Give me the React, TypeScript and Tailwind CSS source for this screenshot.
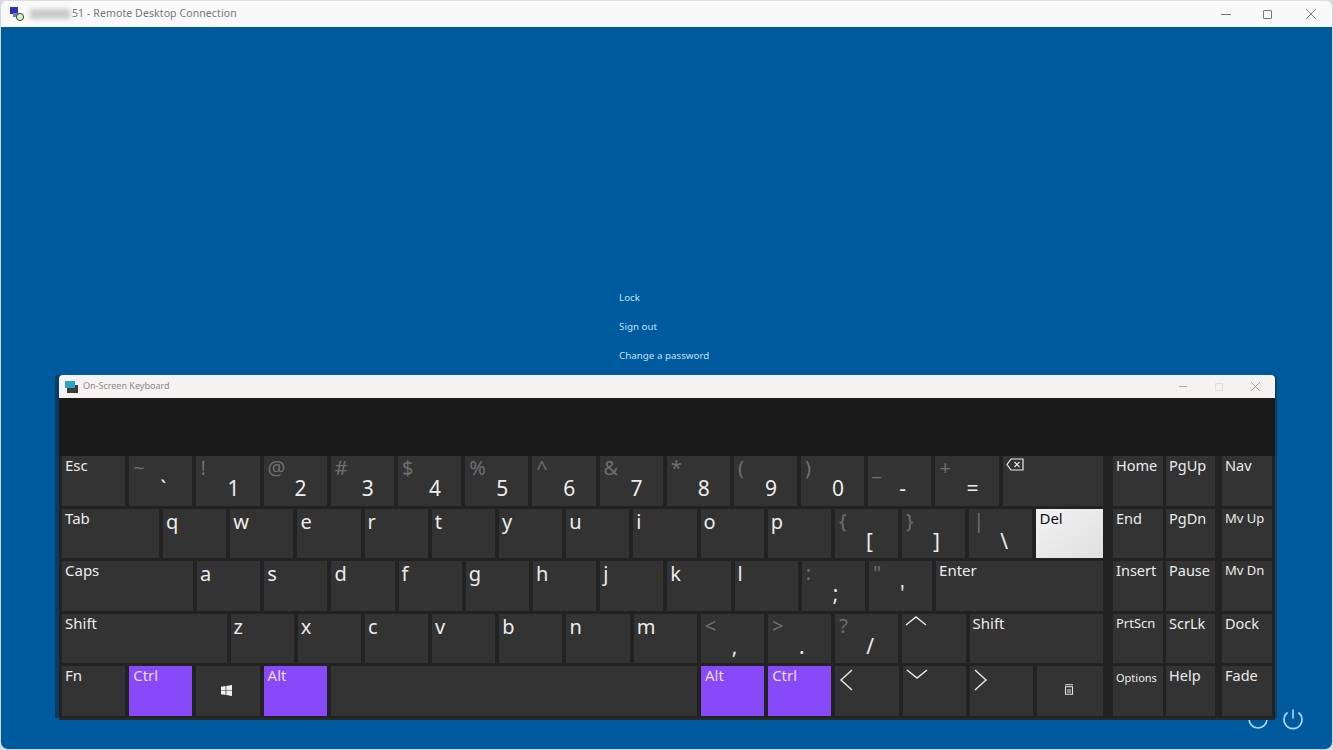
import type { ReactNode } from "react"

const font = "font-['Noto_Sans','Open_Sans',sans-serif]"

type KeyProps = {
  w: string
  top?: string
  low?: string
  label?: string
  kind?: "plain" | "purple" | "light"
  small?: string
  icon?: ReactNode
}

const Chevron = ({ points }: { points: string }) => (
  <svg viewBox="0 0 24 24" className="w-6 h-6 absolute left-[2px] top-[-1px]" fill="none" stroke="#ececec" strokeWidth="1.4">
    <polyline points={points} />
  </svg>
)

const Key = ({ w, top, low, label, kind = "plain", small, icon }: KeyProps) => {
  const bg = kind === "purple" ? "bg-[#8849f8] text-[#e9dcff] pl-[4px]" : kind === "light" ? "bg-gradient-to-br from-[#f2f2f2] to-[#e0e0e0] text-[#111] pl-[3px]" : "bg-[#333333] text-[#ececec] pl-[3px]"
  return (
    <div className={`${w} ${bg} relative h-full shrink-0 flex flex-col`}>
      {label && <span className={`${small ?? "text-[15px]"} leading-[18px]`}>{label}</span>}
      {top && <span className="text-[20px] leading-[24px] h-[20px] pl-[1px] text-[#6f6f6f]">{top}</span>}
      {low && <span className="text-[21px] leading-[24px] pl-[28px]">{low}</span>}
      {icon}
    </div>
  )
}

const Letter = ({ w, c }: { w: string; c: string }) => (
  <div className={`${w} h-full shrink-0 bg-[#333333] text-[#ececec] text-[20px] leading-[26px] pl-[3px]`}>{c}</div>
)

const u = "w-[63.2px]"

const KeysLeft = () => (
  <div className="flex flex-col gap-[3px] w-[1041px] shrink-0">
    <div className="flex gap-[4px] h-[49.6px]">
      <Key w={u} label="Esc" />
      <Key w={u} top="~" low="`" />
      <Key w={u} top="!" low="1" />
      <Key w={u} top="@" low="2" />
      <Key w={u} top="#" low="3" />
      <Key w={u} top="$" low="4" />
      <Key w={u} top="%" low="5" />
      <Key w={u} top="^" low="6" />
      <Key w={u} top="&" low="7" />
      <Key w={u} top="*" low="8" />
      <Key w={u} top="(" low="9" />
      <Key w={u} top=")" low="0" />
      <Key w={u} top="_" low="-" />
      <Key w={u} top="+" low="=" />
      <Key
        w="w-[100px]"
        icon={
          <svg viewBox="0 0 18 13" className="w-[18px] h-[13px] absolute left-[3px] top-[2px]" fill="none" stroke="#ececec" strokeWidth="1.2">
            <path d="M5 1h12v11H5L1 6.5z" />
            <path d="M8.5 4l5 5M13.5 4l-5 5" />
          </svg>
        }
      />
    </div>
    <div className="flex gap-[4px] h-[49.6px]">
      <Key w="w-[97px]" label="Tab" />
      {"qwertyuiop".split("").map((c) => (
        <Letter key={c} w={u} c={c} />
      ))}
      <Key w={u} top="{" low="[" />
      <Key w={u} top="}" low="]" />
      <Key w={u} top="|" low="\" />
      <Key w="w-[66.8px]" label="Del" kind="light" />
    </div>
    <div className="flex gap-[4px] h-[49.6px]">
      <Key w="w-[131px]" label="Caps" />
      {"asdfghjkl".split("").map((c) => (
        <Letter key={c} w={u} c={c} />
      ))}
      <Key w={u} top=":" low=";" />
      <Key w={u} top={'"'} low="'" />
      <Key w="w-[167px]" label="Enter" />
    </div>
    <div className="flex gap-[4px] h-[49.6px]">
      <Key w="w-[164.5px]" label="Shift" />
      {"zxcvbnm".split("").map((c) => (
        <Letter key={c} w={u} c={c} />
      ))}
      <Key w={u} top="<" low="," />
      <Key w={u} top=">" low="." />
      <Key w={u} top="?" low="/" />
      <Key w={u} icon={<Chevron points="2,12 12,4 22,12" />} />
      <Key w="w-[133.5px]" label="Shift" />
    </div>
    <div className="flex gap-[4px] h-[49.6px]">
      <Key w={u} label="Fn" />
      <Key w={u} label="Ctrl" kind="purple" />
      <Key
        w={u}
        icon={
          <svg viewBox="0 0 12 12" className="w-[11px] h-[11px] absolute left-[25px] top-[19px]" fill="#f0f0f0">
            <path d="M0 1.8l5-.7v4.5H0zM5.8 1l6.2-1v5.6H5.8zM0 6.4h5v4.5l-5-.7zM5.8 6.4H12V12l-6.2-1z" />
          </svg>
        }
      />
      <Key w={u} label="Alt" kind="purple" />
      <Key w="w-[366.2px]" />
      <Key w={u} label="Alt" kind="purple" />
      <Key w={u} label="Ctrl" kind="purple" />
      <Key
        w={u}
        icon={
          <svg viewBox="0 0 16 24" className="w-4 h-6 absolute left-[4px] top-[2px]" fill="none" stroke="#ececec" strokeWidth="1.4">
            <polyline points="13,2 2,12 13,22" />
          </svg>
        }
      />
      <Key w={u} icon={<Chevron points="2,5 12,13 22,5" />} />
      <Key
        w={u}
        icon={
          <svg viewBox="0 0 16 24" className="w-4 h-6 absolute left-[2px] top-[2px]" fill="none" stroke="#ececec" strokeWidth="1.4">
            <polyline points="3,2 14,12 3,22" />
          </svg>
        }
      />
      <Key
        w="w-[66px]"
        icon={
          <svg viewBox="0 0 10 11" className="w-[10px] h-[11px] absolute left-[27px] top-[18px]" fill="none" stroke="#e4e4e4" strokeWidth="1.1">
            <path d="M1 .8h8M1.5 2.8h7v7.5h-7zM3 6h4M3 8h4" />
          </svg>
        }
      />
    </div>
  </div>
)

const KeysRight = () => (
  <div className="flex flex-col gap-[3px] ml-[10px]">
    {[
      ["Home", "PgUp", "Nav"],
      ["End", "PgDn", "Mv Up"],
      ["Insert", "Pause", "Mv Dn"],
      ["PrtScn", "ScrLk", "Dock"],
      ["Options", "Help", "Fade"],
    ].map((row) => (
      <div key={row[0]} className="flex gap-[3px] h-[49.6px]">
        <Key w="w-[50px]" label={row[0]} small={row[0] === "Options" ? "text-[11px] pt-[3px]" : row[0] === "PrtScn" ? "text-[13px]" : "text-[14.5px]"} />
        <Key w="w-[49px]" label={row[1]} small="text-[14.5px]" />
        <div className="ml-[4px] h-full">
          <Key w="w-[49.5px]" label={row[2]} small={row[2].startsWith("Mv") ? "text-[13px]" : "text-[14.5px]"} />
        </div>
      </div>
    ))}
  </div>
)

const Osk = () => (
  <div className="absolute left-[59px] top-[375px] w-[1216px] h-[343px] flex flex-col rounded-t-[4px] shadow-[-4px_0_0_#0c3a63,2px_0_0_#123f66,0_2px_0_#2a2a2a]">
    <div className="h-[23px] shrink-0 bg-[#f6f2f2] rounded-t-[4px] flex items-center">
      <svg viewBox="0 0 14 12" className="w-[14px] h-[12px] ml-[6px]">
        <rect x="2" y="4" width="11" height="8" fill="#3a3a3a" />
        <rect x="0" y="0" width="10" height="7" fill="#27a4c8" />
      </svg>
      <span className="ml-[4px] pb-[2px] text-[9px] text-[#8a8a8a]">On-Screen Keyboard</span>
      <div className="ml-auto flex items-center gap-[28px] mr-[15px]">
        <div className="w-[8px] h-px bg-[#a8a8a8]" />
        <div className="w-[8px] h-[8px] border border-[#e2dfdf]" />
        <svg viewBox="0 0 10 10" className="w-[9px] h-[9px]" fill="none" stroke="#999" strokeWidth="1">
          <path d="M0 0l10 10M10 0L0 10" />
        </svg>
      </div>
    </div>
    <div className="h-[58px] shrink-0 bg-[#1a1a1a]" />
    <div className="flex-1 bg-[#222222] pl-[3px] pr-[3px]">
      <div className="flex">
        <KeysLeft />
        <KeysRight />
      </div>
    </div>
  </div>
)

export default function App() {
  return (
    <div className={`${font} relative w-[1333px] h-[750px] overflow-hidden bg-[#d9dde2]`}>
      <div className="h-full flex flex-col rounded-[8px] overflow-hidden border-l border-r border-b border-[#cfd6dc]">
        <div className="h-[27px] shrink-0 bg-[#f9f9f9] border-t border-[#dedede] flex items-center">
          <svg viewBox="0 0 14 14" className="w-[14px] h-[14px] ml-[9px]">
            <rect x="0" y="0" width="8" height="7" fill="#2732b8" />
            <rect x="3" y="6" width="7" height="4" fill="#6d7fc8" />
            <circle cx="10" cy="10" r="3.6" fill="#dfe8c8" stroke="#27552a" strokeWidth="1" />
          </svg>
          <div className="ml-[6px] w-[40px] h-[10px] bg-[#c9c9c9] blur-[2px]" />
          <span className="ml-[2px] text-[10.5px] text-[#777777] tracking-[0.1px]">51 - Remote Desktop Connection</span>
          <div className="ml-auto flex items-center gap-[32px] mr-[16px]">
            <div className="w-[10px] h-px bg-[#777]" />
            <div className="w-[9px] h-[9px] border border-[#777] rounded-[1px]" />
            <svg viewBox="0 0 10 10" className="w-[10px] h-[10px] ml-[2px]" fill="none" stroke="#777" strokeWidth="0.9">
              <path d="M0 0l10 10M10 0L0 10" />
            </svg>
          </div>
        </div>
        <div className="flex-1 bg-[#005a9e] pl-[618px] pt-[263.5px] flex flex-col gap-[16px] text-[9.8px] leading-[13.4px] text-[#bfe2f7]">
          <span>Lock</span>
          <span>Sign out</span>
          <span>Change a password</span>
        </div>
      </div>
      <svg viewBox="0 0 24 24" className="absolute left-[1246px] top-[707px] w-[24px] h-[24px]" fill="none" stroke="#a9d9f5" strokeWidth="1.6">
        <circle cx="12" cy="12" r="9" />
      </svg>
      <svg viewBox="0 0 24 24" className="absolute left-[1281px] top-[707px] w-[24px] h-[24px]" fill="none" stroke="#a9d9f5" strokeWidth="1.6">
        <path d="M12 2.5v9" />
        <path d="M6.5 5.5a9 9 0 1 0 11 0" />
      </svg>
      <Osk />
    </div>
  )
}
